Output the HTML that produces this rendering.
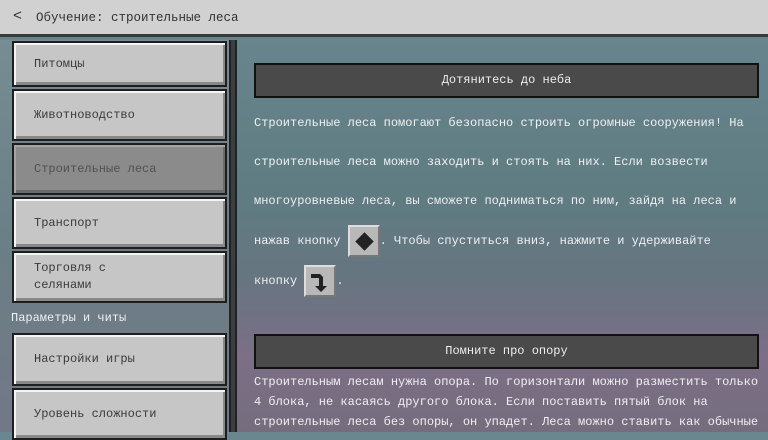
<!DOCTYPE html>
<html><head><meta charset="utf-8"><style>
*{margin:0;padding:0;box-sizing:border-box}
body{width:768px;height:432px;overflow:hidden;position:relative;font-family:"Liberation Mono","DejaVu Sans Mono",monospace;font-size:12px;
background:linear-gradient(180deg,#6a8790 0%,#5f7c82 45%,#677581 65%,#7c6f86 82%,#756d7e 100%);}
.hdr{position:absolute;left:0;top:0;width:768px;height:37px;background:#d1d1d1;border-bottom:3px solid #3a3a3a;color:#333}
.hdr span{position:absolute;left:36px;top:11px;font-size:12.5px}
.hdr i{position:absolute;left:13px;top:8px;font-style:normal;font-size:15px}
.left{position:absolute;left:0;top:40px;width:232px;height:392px;background:linear-gradient(180deg,#768d93,#6a7f86 50%,#737886)}
.btn{position:absolute;left:12px;width:215px;background:#c6c6c6;border:2px solid #1e1e1e;box-shadow:inset 2px 2px 0 #f4f4f4,inset -2px -3px 0 #888;color:#3a3a3a;padding-left:20px;display:flex;align-items:center;line-height:17px}
.btn.sel{background:#8b8b8b;box-shadow:inset 2px 2px 0 #a5a5a5,inset -2px -3px 0 #6b6b6b;color:#505050}
.div{position:absolute;left:229px;top:40px;width:8px;height:392px;background:#3a3f42;border-left:2px solid #222;border-right:2px solid #222}
.bar{position:absolute;left:254px;width:505px;height:35px;background:#4a4a4a;border:2px solid #111;color:#eee;text-align:center;line-height:31px}
.t{position:absolute;left:254px;color:#f0f0f0;white-space:pre}
.ic{display:inline-block;width:32px;height:32px;background:#b8b8b8;border:2px solid #ddd;border-right-color:#777;border-bottom-color:#777;vertical-align:middle;position:relative}
</style></head><body>
<div class="hdr"><i>&lt;</i><span>Обучение: строительные леса</span></div>
<div class="left"></div>
<div class="btn" style="top:41px;height:46px">Питомцы</div>
<div class="btn" style="top:89px;height:52px">Животноводство</div>
<div class="btn sel" style="top:143px;height:52px">Строительные леса</div>
<div class="btn" style="top:197px;height:52px">Транспорт</div>
<div class="btn" style="top:251px;height:52px">Торговля с<br>селянами</div>
<div style="position:absolute;left:11px;top:311px;color:#f0f0f0">Параметры и читы</div>
<div class="btn" style="top:333px;height:53px">Настройки игры</div>
<div class="btn" style="top:388px;height:52px">Уровень сложности</div>
<div class="div"></div>
<div class="bar" style="top:63px">Дотянитесь до неба</div>
<div class="t" style="top:116px">Строительные леса помогают безопасно строить огромные сооружения! На</div>
<div class="t" style="top:155px">строительные леса можно заходить и стоять на них. Если возвести</div>
<div class="t" style="top:194px">многоуровневые леса, вы сможете подниматься по ним, зайдя на леса и</div>
<div class="t" style="top:225px;line-height:32px">нажав кнопку <span class="ic"><span style="position:absolute;left:8px;top:8px;width:13px;height:13px;background:#222;transform:rotate(45deg)"></span></span>. Чтобы спуститься вниз, нажмите и удерживайте</div>
<div class="t" style="top:265px;line-height:32px">кнопку <span class="ic"><svg width="28" height="28" style="position:absolute;left:0;top:0"><path d="M5 7h9l3 3v9h4l-6 6-6-6h4v-8H5z" fill="#222"/></svg></span>.</div>
<div class="bar" style="top:334px">Помните про опору</div>
<div class="t" style="top:375px">Строительным лесам нужна опора. По горизонтали можно разместить только</div>
<div class="t" style="top:395px">4 блока, не касаясь другого блока. Если поставить пятый блок на</div>
<div class="t" style="top:415px">строительные леса без опоры, он упадет. Леса можно ставить как обычные</div>
</body></html>
